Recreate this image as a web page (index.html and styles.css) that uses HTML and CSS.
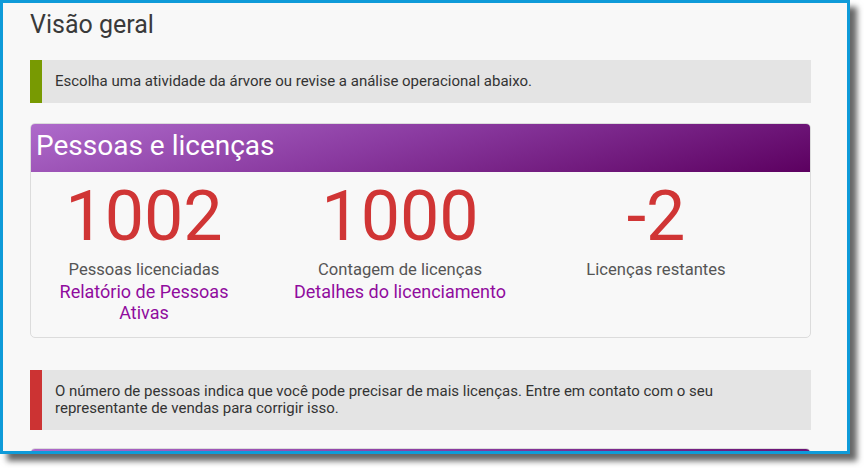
FILE: index.html
```html
<!DOCTYPE html>
<html lang="pt-BR">
<head>
<meta charset="utf-8">
<title>Visão geral</title>
<link rel="stylesheet" href="styles.css">
</head>
<body>
<div class="frame">
  <div class="content">
    <h2 class="title">Visão geral</h2>
    <div class="note note-info">
      <div class="note-text">Escolha uma atividade da árvore ou revise a análise operacional abaixo.</div>
    </div>
    <div class="card">
      <div class="card-head">Pessoas e licenças</div>
      <div class="stats">
        <div class="stat">
          <div class="stat-num">1002</div>
          <div class="stat-label">Pessoas licenciadas</div>
          <a class="stat-link" href="#">Relatório de Pessoas Ativas</a>
        </div>
        <div class="stat">
          <div class="stat-num">1000</div>
          <div class="stat-label">Contagem de licenças</div>
          <a class="stat-link" href="#">Detalhes do licenciamento</a>
        </div>
        <div class="stat">
          <div class="stat-num">-2</div>
          <div class="stat-label">Licenças restantes</div>
        </div>
      </div>
    </div>
    <div class="note note-warn">
      <div class="note-text">O número de pessoas indica que você pode precisar de mais licenças. Entre em contato com o seu representante de vendas para corrigir isso.</div>
    </div>
    <div class="card card-next">
      <div class="card-head"></div>
    </div>
  </div>
</div>
</body>
</html>
```

FILE: styles.css
```css
html, body {
  margin: 0;
  padding: 0;
  background: #ffffff;
}
body {
  width: 864px;
  height: 468px;
  overflow: hidden;
  font-family: Roboto, "Liberation Sans", Arial, sans-serif;
}
.frame {
  box-sizing: border-box;
  width: 850px;
  height: 454px;
  border: 3px solid #0f9bd9;
  background: #f8f8f8;
  overflow: hidden;
  box-shadow: 7px 7px 6px rgba(0, 0, 0, 0.6);
}
.content {
  padding: 0 36px 0 27px;
}
.title {
  margin: 7px 0 0 0;
  font-size: 25px;
  line-height: 30px;
  font-weight: 400;
  color: #3a3a3a;
}
.note {
  display: flex;
  margin-top: 20px;
  background: #e4e4e4;
  border-left: 12px solid #789a02;
}
.note-warn {
  margin-top: 32px;
  border-left-color: #cc3333;
}
.note-text {
  padding: 13px 60px 13px 13px;
  font-size: 15px;
  line-height: 17.25px;
  color: #333333;
}
.card {
  margin-top: 20px;
  border: 1px solid #dcdcdc;
  border-radius: 5px;
  background: #f8f8f8;
  overflow: hidden;
}
.card-head {
  height: 44px;
  padding: 0 0 4px 5px;
  line-height: 44px;
  font-size: 28px;
  color: #ffffff;
  background: linear-gradient(165deg, #ae6bcb 0%, #8a3aa0 45%, #5c0060 100%);
}
.stats {
  display: grid;
  grid-template-columns: repeat(3, 226px);
  column-gap: 30px;
  padding: 9px 0 13px 0;
}
.stat {
  display: flex;
  flex-direction: column;
  align-items: center;
  text-align: center;
  padding: 0 4px;
}
.stat-num {
  font-size: 70px;
  line-height: 70px;
  color: #d03535;
}
.stat-label {
  margin-top: 8px;
  font-size: 16.6px;
  line-height: 21.5px;
  color: #555555;
}
.stat-link {
  font-size: 18px;
  line-height: 21.5px;
  color: #900c9e;
  text-decoration: none;
}
.card-next {
  margin-top: 18px;
  height: 40px;
}
```
